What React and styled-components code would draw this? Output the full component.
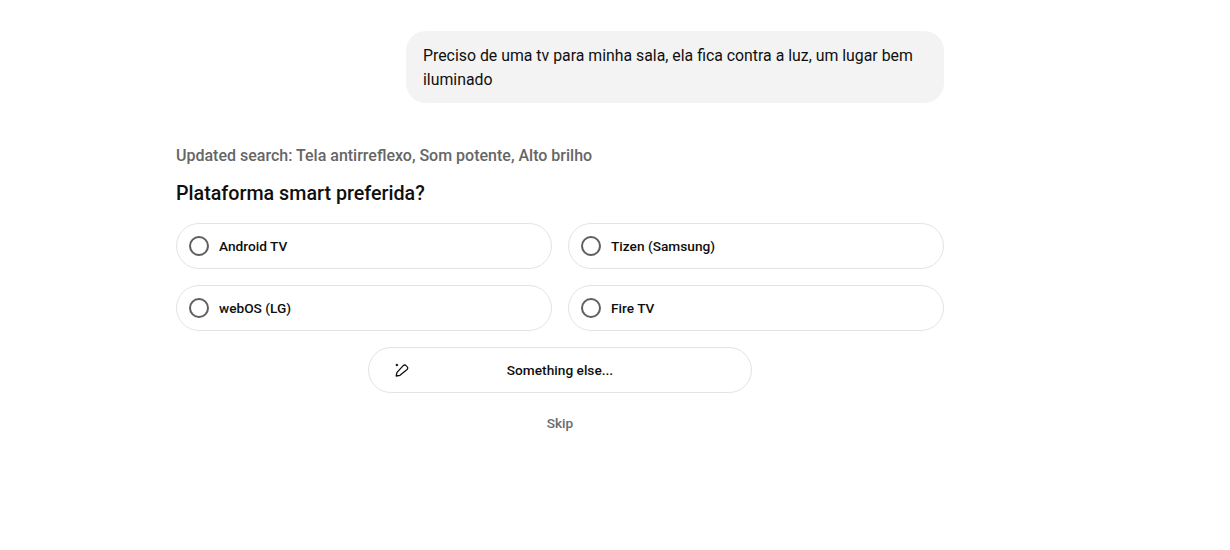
import React from 'react';
import styled, { createGlobalStyle } from 'styled-components';

const GlobalStyle = createGlobalStyle`
  html, body {
    margin: 0;
    padding: 0;
    background: #fff;
    font-family: Roboto, 'Noto Sans', sans-serif;
    color: #0f0f0f;
  }
`;

const Page = styled.div`
  width: 1120px;
  height: 550px;
  display: flex;
  justify-content: center;
  box-sizing: border-box;
  padding-top: 31px;
`;

const Column = styled.div`
  width: 768px;
  display: flex;
  flex-direction: column;
`;

const Bubble = styled.div`
  align-self: flex-end;
  width: 538px;
  box-sizing: border-box;
  padding: 13px 17px 11px;
  background: #f3f3f3;
  border-radius: 20px;
  font-size: 15.85px;
  line-height: 24px;
`;

const Updated = styled.div`
  margin-top: 42px;
  font-size: 16px;
  line-height: 22px;
  font-weight: 500;
  color: #666;
`;

const Question = styled.h2`
  margin: 13px 0 0;
  font-size: 19.7px;
  line-height: 28px;
  font-weight: 500;
`;

const Options = styled.div`
  margin-top: 15px;
  display: grid;
  grid-template-columns: 1fr 1fr;
  gap: 16px;
`;

const Option = styled.button`
  height: 46px;
  box-sizing: border-box;
  display: flex;
  align-items: center;
  gap: 10px;
  padding: 0 12px;
  background: #fff;
  border: 1px solid #e3e3e3;
  border-radius: 23px;
  font: inherit;
  font-size: 13.7px;
  font-weight: 500;
  color: #0f0f0f;
`;

const Radio = styled.span`
  width: 20px;
  height: 20px;
  box-sizing: border-box;
  border: 2px solid #5f5f5f;
  border-radius: 50%;
  flex: none;
`;

const Other = styled.button`
  align-self: center;
  width: 384px;
  height: 46px;
  margin-top: 16px;
  box-sizing: border-box;
  position: relative;
  display: flex;
  align-items: center;
  justify-content: center;
  background: #fff;
  border: 1px solid #e3e3e3;
  border-radius: 23px;
  font: inherit;
  font-size: 13.7px;
  font-weight: 500;
  color: #0f0f0f;
`;

const OtherIcon = styled.svg`
  position: absolute;
  left: 25px;
  top: 14px;
  width: 16px;
  height: 16px;
`;

const Skip = styled.button`
  align-self: center;
  margin-top: 20px;
  padding: 0;
  background: none;
  border: none;
  font: inherit;
  font-size: 13.7px;
  line-height: 20px;
  font-weight: 500;
  color: #6b6b6b;
`;

const options = ['Android TV', 'Tizen (Samsung)', 'webOS (LG)', 'Fire TV'];

export default function App() {
  return (
    <>
      <GlobalStyle />
      <Page>
        <Column>
          <Bubble>
            Preciso de uma tv para minha sala, ela fica contra a luz, um lugar bem iluminado
          </Bubble>
          <Updated>Updated search: Tela antirreflexo, Som potente, Alto brilho</Updated>
          <Question>Plataforma smart preferida?</Question>
          <Options>
            {options.map((item) => (
              <Option key={item}>
                <Radio />
                {item}
              </Option>
            ))}
          </Options>
          <Other>
            <OtherIcon viewBox="0 0 16 16" fill="none" stroke="#0f0f0f" strokeWidth="1.3" strokeLinejoin="round" strokeLinecap="round">
              <path d="M2.2 14l.8-3.6L9.2 3.6a2 2 0 0 1 2.9 0l1 1a2 2 0 0 1 0 2.9L6 13.3z" />
              <circle cx="2.8" cy="3" r="0.9" fill="#0f0f0f" strokeWidth="0.6" />
            </OtherIcon>
            Something else...
          </Other>
          <Skip>Skip</Skip>
        </Column>
      </Page>
    </>
  );
}
